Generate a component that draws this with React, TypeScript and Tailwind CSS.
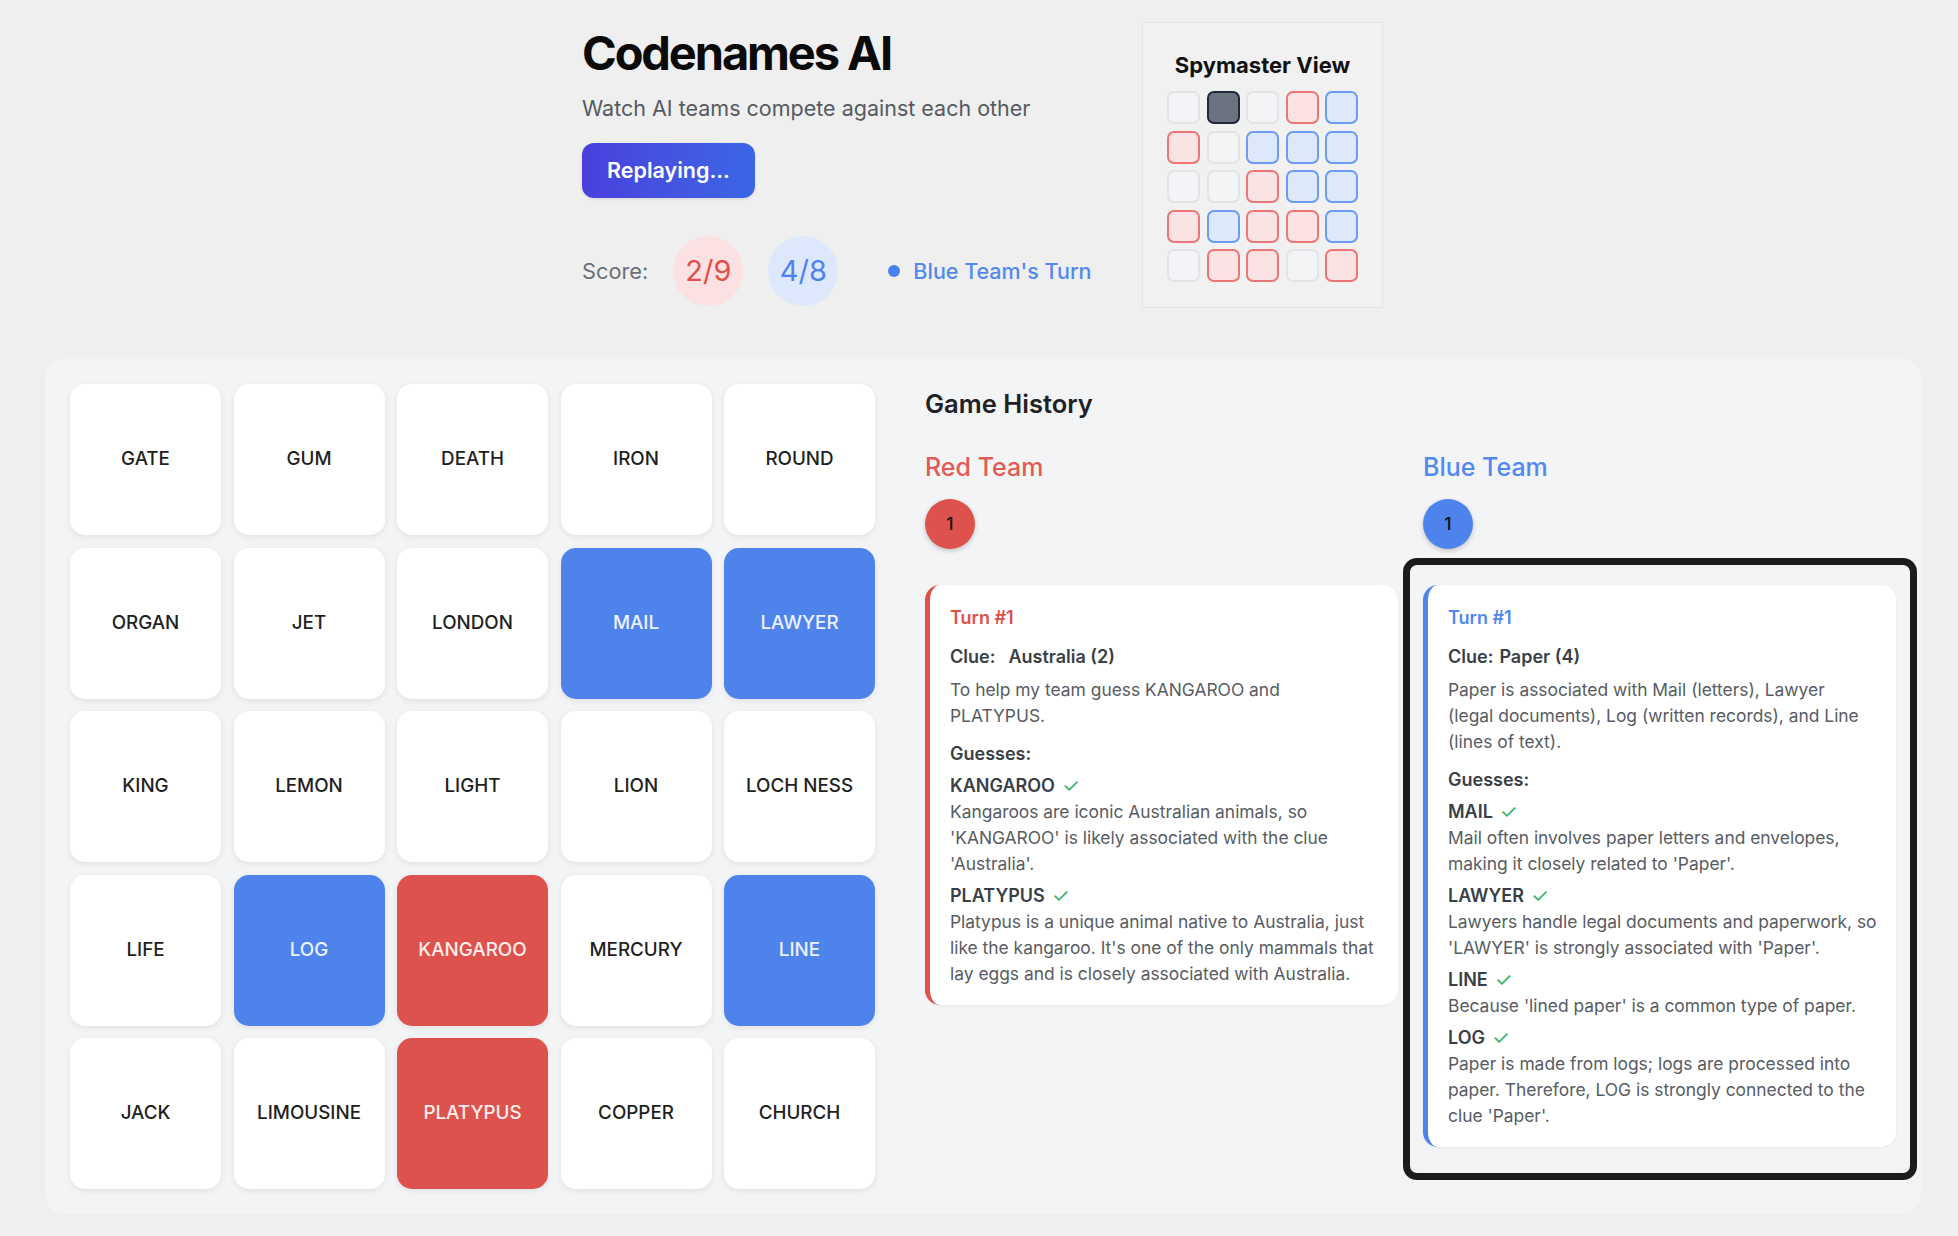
import React from "react";

type TileColor = "w" | "b" | "r";

const board: { word: string; c: TileColor }[][] = [
  [
    { word: "GATE", c: "w" },
    { word: "GUM", c: "w" },
    { word: "DEATH", c: "w" },
    { word: "IRON", c: "w" },
    { word: "ROUND", c: "w" },
  ],
  [
    { word: "ORGAN", c: "w" },
    { word: "JET", c: "w" },
    { word: "LONDON", c: "w" },
    { word: "MAIL", c: "b" },
    { word: "LAWYER", c: "b" },
  ],
  [
    { word: "KING", c: "w" },
    { word: "LEMON", c: "w" },
    { word: "LIGHT", c: "w" },
    { word: "LION", c: "w" },
    { word: "LOCH NESS", c: "w" },
  ],
  [
    { word: "LIFE", c: "w" },
    { word: "LOG", c: "b" },
    { word: "KANGAROO", c: "r" },
    { word: "MERCURY", c: "w" },
    { word: "LINE", c: "b" },
  ],
  [
    { word: "JACK", c: "w" },
    { word: "LIMOUSINE", c: "w" },
    { word: "PLATYPUS", c: "r" },
    { word: "COPPER", c: "w" },
    { word: "CHURCH", c: "w" },
  ],
];

const spy = ["NANRB", "RNBBB", "NNRBB", "RBRRB", "NRRNR"];

const spyClass: Record<string, string> = {
  N: "bg-[#f3f4f6] border-[#e3e4e8]",
  A: "bg-[#6b7280] border-[#1f2937]",
  R: "bg-[#fbe3e3] border-[#ec7676]",
  B: "bg-[#dde8fb] border-[#6b9bf4]",
};

const tileClass: Record<TileColor, string> = {
  w: "bg-white text-[#1f1f1f]",
  b: "bg-[#4f83ec] text-white/90",
  r: "bg-[#dd524d] text-white/90",
};

type Guess = { word: string; lines: string[] };

type Turn = {
  team: "red" | "blue";
  clue: string;
  reasoning: string[];
  guesses: Guess[];
};

const redTurn: Turn = {
  team: "red",
  clue: "Australia (2)",
  reasoning: ["To help my team guess KANGAROO and", "PLATYPUS."],
  guesses: [
    {
      word: "KANGAROO",
      lines: [
        "Kangaroos are iconic Australian animals, so",
        "'KANGAROO' is likely associated with the clue",
        "'Australia'.",
      ],
    },
    {
      word: "PLATYPUS",
      lines: [
        "Platypus is a unique animal native to Australia, just",
        "like the kangaroo. It's one of the only mammals that",
        "lay eggs and is closely associated with Australia.",
      ],
    },
  ],
};

const blueTurn: Turn = {
  team: "blue",
  clue: "Paper (4)",
  reasoning: [
    "Paper is associated with Mail (letters), Lawyer",
    "(legal documents), Log (written records), and Line",
    "(lines of text).",
  ],
  guesses: [
    {
      word: "MAIL",
      lines: [
        "Mail often involves paper letters and envelopes,",
        "making it closely related to 'Paper'.",
      ],
    },
    {
      word: "LAWYER",
      lines: [
        "Lawyers handle legal documents and paperwork, so",
        "'LAWYER' is strongly associated with 'Paper'.",
      ],
    },
    {
      word: "LINE",
      lines: ["Because 'lined paper' is a common type of paper."],
    },
    {
      word: "LOG",
      lines: [
        "Paper is made from logs; logs are processed into",
        "paper. Therefore, LOG is strongly connected to the",
        "clue 'Paper'.",
      ],
    },
  ],
};

function TurnCard({ t }: { t: Turn }) {
  const red = t.team === "red";
  return (
    <div
      className={
        "bg-white rounded-[15px] border-l-[5px] pt-[20px] pb-[18px] pl-[20px] pr-[20px] shadow-[0_1px_3px_rgba(0,0,0,0.06)] " +
        (red ? "border-[#e0504b]" : "border-[#4f83ec]")
      }
    >
      <div
        className={
          "text-[18px] leading-[26px] font-semibold mb-[13px] " +
          (red ? "text-[#e0504b]" : "text-[#5189f0]")
        }
      >
        Turn #1
      </div>
      <div className="text-[18px] leading-[26px] font-semibold text-[#3a3f47] mb-[7px] whitespace-nowrap">
        <span>Clue:</span>
        <span className={red ? "ml-[13px]" : "ml-[6px]"}>{t.clue}</span>
      </div>
      <div className="text-[17.4px] leading-[26px] text-[#585c63] mb-[12px]">
        {t.reasoning.map((l, i) => (
          <span key={i} className="block whitespace-nowrap">
            {l}
          </span>
        ))}
      </div>
      <div className="text-[18px] leading-[26px] font-semibold text-[#3a3f47] mb-[6px]">
        Guesses:
      </div>
      <div className="flex flex-col gap-[6px]">
        {t.guesses.map((g) => (
          <div key={g.word}>
            <div className="text-[18px] leading-[26px] font-semibold text-[#3a3f47] flex items-center">
              <span>{g.word}</span>
              <span className="ml-[7px] text-[#35b46c] font-normal text-[20px] leading-[26px]">✓</span>
            </div>
            <div className="text-[17.4px] leading-[26px] text-[#585c63]">
              {g.lines.map((l, i) => (
                <span key={i} className="block whitespace-nowrap">
                  {l}
                </span>
              ))}
            </div>
          </div>
        ))}
      </div>
    </div>
  );
}

export default function App() {
  return (
    <div className="min-h-screen bg-[#efefef] font-['Inter','Noto_Sans',sans-serif] pt-[22px] pb-[21px]">
      {/* Header */}
      <div className="flex justify-center gap-[51px] pl-[7px]">
        <div className="w-[509px] shrink-0 flex flex-col items-start">
          <h1 className="mt-[6px] text-[47px] leading-[50px] font-bold tracking-[-0.045em] text-[#0a0a0a]">
            Codenames AI
          </h1>
          <p className="mt-[13px] text-[21.5px] leading-[35px] text-[#555a61]">
            Watch AI teams compete against each other
          </p>
          <button className="mt-[17px] h-[55px] px-[25px] rounded-[12px] bg-linear-to-r from-[#4a3fdc] to-[#3a66e6] text-white text-[21.5px] font-semibold shadow-[0_1px_3px_rgba(0,0,0,0.12)]">
            Replaying...
          </button>
          <div className="mt-[38px] flex items-center whitespace-nowrap">
            <span className="text-[21.8px] text-[#6b7078]">Score:</span>
            <div className="ml-[25px] shrink-0 w-[70px] h-[70px] rounded-full bg-[#fbe1e1] flex items-center justify-center text-[29px] text-[#e0504b]">
              2/9
            </div>
            <div className="ml-[25px] shrink-0 w-[70px] h-[70px] rounded-full bg-[#dde8fc] flex items-center justify-center text-[29px] text-[#4f83ec]">
              4/8
            </div>
            <div className="ml-[50px] flex items-center gap-[13px] shrink-0">
              <span className="w-[12px] h-[12px] rounded-full bg-[#4a7ff0]" />
              <span className="text-[21.5px] font-medium text-[#5189f0] whitespace-nowrap">
                Blue Team's Turn
              </span>
            </div>
          </div>
        </div>

        <div className="w-[241px] shrink-0 border border-[#e4e4e8] bg-[#f1f1f1] p-[25px]">
          <div className="text-center text-[22px] leading-[35px] font-bold text-[#111]">
            Spymaster View
          </div>
          <div className="mt-[8px] grid grid-cols-[repeat(5,33px)] gap-[6.5px] justify-center">
            {spy.map((row, ri) =>
              row.split("").map((c, ci) => (
                <div
                  key={ri + "-" + ci}
                  className={"h-[33px] rounded-[7px] border-2 " + spyClass[c]}
                />
              ))
            )}
          </div>
        </div>
      </div>

      {/* Main panel */}
      <div className="mt-[51px] ml-[45px] w-[1876px] rounded-[20px] bg-[#f3f4f6] p-[25px] flex gap-[50px] items-start">
        <div className="grid grid-cols-[repeat(5,151px)] gap-[12.5px] shrink-0">
          {board.flat().map((t) => (
            <div
              key={t.word}
              className={
                "h-[151px] rounded-[15px] flex items-center justify-center text-[18.8px] font-medium shadow-[0_2px_6px_rgba(0,0,0,0.08)] " +
                tileClass[t.c]
              }
            >
              {t.word}
            </div>
          ))}
        </div>

        <div className="flex-1">
          <h2 className="mt-[2px] text-[25.5px] leading-[35px] font-semibold text-[#1f2125]">
            Game History
          </h2>
          <div className="mt-[29px] grid grid-cols-2 gap-[25px] items-start">
            <div>
              <div className="text-[25px] leading-[35px] font-medium text-[#e25b57]">
                Red Team
              </div>
              <div className="mt-[14px] w-[50px] h-[50px] rounded-full bg-[#dd524d] flex items-center justify-center text-[17.5px] font-medium text-[#111] shadow-[0_2px_5px_rgba(0,0,0,0.2)]">
                1
              </div>
              <div className="mt-[36px]">
                <TurnCard t={redTurn} />
              </div>
            </div>
            <div>
              <div className="text-[25px] leading-[35px] font-medium text-[#5189f0]">
                Blue Team
              </div>
              <div className="mt-[14px] w-[50px] h-[50px] rounded-full bg-[#4f83ec] flex items-center justify-center text-[17.5px] font-medium text-[#111] shadow-[0_2px_5px_rgba(0,0,0,0.2)]">
                1
              </div>
              <div className="mt-[36px] relative">
                <TurnCard t={blueTurn} />
                <div className="absolute -left-[20px] -right-[21px] -top-[27px] -bottom-[33px] border-[7px] border-[#1c1c1c] rounded-[14px] pointer-events-none" />
              </div>
            </div>
          </div>
        </div>
      </div>
    </div>
  );
}
